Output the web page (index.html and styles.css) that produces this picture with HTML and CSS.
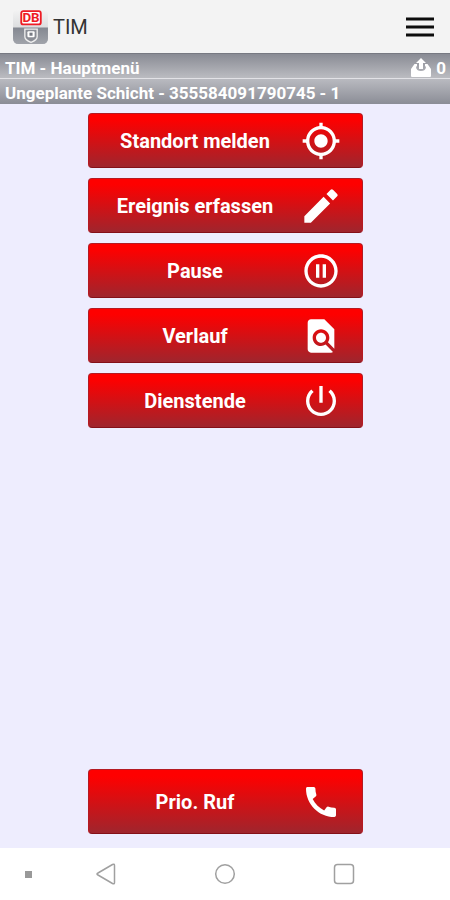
FILE: index.html
```html
<!DOCTYPE html>
<html lang="de">
<head>
<meta charset="utf-8">
<meta name="viewport" content="width=device-width, initial-scale=1">
<title>TIM - Hauptmenü</title>
<link rel="stylesheet" href="styles.css">
</head>
<body>
<header class="appbar">
  <svg class="logo" viewBox="0 0 36 36" aria-hidden="true">
    <defs>
      <linearGradient id="top" x1="0" y1="0" x2="0" y2="1"><stop offset="0" stop-color="#f4f4f4"/><stop offset="1" stop-color="#c8cacd"/></linearGradient>
      <linearGradient id="base" x1="0" y1="0" x2="0" y2="1"><stop offset="0" stop-color="#848891"/><stop offset="1" stop-color="#a0a3aa"/></linearGradient>
    </defs>
    <rect x="1" y="1" width="34" height="34" rx="5" fill="url(#top)"/>
    <path d="M1 19h34v11a5 5 0 0 1-5 5H6a5 5 0 0 1-5-5z" fill="url(#base)"/>
    <rect x="9" y="3" width="19" height="13" rx="2" fill="#fff" stroke="#ee1c25" stroke-width="1.800"/>
    <text class="logo-text" x="18.500" y="14" text-anchor="middle">DB</text>
    <path d="M12.500 20.500h12v7.500c0 2.500-3.500 4.500-6 5.500-2.500-1-6-3-6-5.500z" fill="#8b8e96" stroke="#eee" stroke-width="1.300"/>
    <rect x="15" y="22.500" width="7" height="6" rx="1" fill="#fff"/>
    <rect x="17" y="24" width="3" height="3" fill="#777b84"/>
  </svg>
  <h1 class="title">TIM</h1>
  <button class="menu" type="button" aria-label="Menü">
    <svg viewBox="0 0 28 20" aria-hidden="true"><path d="M0 2h28M0 10h28M0 18h28" stroke="#0c0c0c" stroke-width="3"/></svg>
  </button>
</header>
<div class="strip strip-top">
  <span>TIM - Hauptmenü</span>
  <span class="outbox">
    <svg viewBox="0 0 20 20" aria-hidden="true"><path d="M10 0l5 5h-3v6H8V5H5z"/><path d="M3.500 6H6v2.500H5c0 3 2 4.500 5 4.500s5-1.500 5-4.500h-1V6h2.500l3.500 5v7q0 1-1 1H1q-1 0-1-1v-7z"/></svg>
    <span>0</span>
  </span>
</div>
<div class="strip strip-bottom"><span>Ungeplante Schicht - 355584091790745 - 1</span></div>
<main class="content">
  <button class="action" type="button"><span>Standort melden</span>
    <svg viewBox="0 0 24 24" aria-hidden="true"><path d="M12 8c-2.210 0-4 1.790-4 4s1.790 4 4 4 4-1.790 4-4-1.790-4-4-4zm8.940 3c-.46-4.170-3.770-7.480-7.940-7.940V1h-2v2.060C6.830 3.520 3.520 6.830 3.060 11H1v2h2.060c.46 4.170 3.770 7.480 7.940 7.940V23h2v-2.060c4.170-.46 7.480-3.770 7.940-7.940H23v-2h-2.060zM12 19c-3.870 0-7-3.130-7-7s3.130-7 7-7 7 3.130 7 7-3.130 7-7 7z"/></svg>
  </button>
  <button class="action" type="button"><span>Ereignis erfassen</span>
    <svg viewBox="0 0 24 24" aria-hidden="true"><path d="M2 18.080V22h3.920L17.480 10.440l-3.920-3.920zM21.700 6.220a1 1 0 0 0 0-1.410L19.190 2.300a1 1 0 0 0-1.410 0l-2.500 2.500 3.920 3.920z"/></svg>
  </button>
  <button class="action" type="button"><span>Pause</span>
    <svg viewBox="0 0 24 24" aria-hidden="true"><path d="M9 16h2V8H9v8zm3-14C6.480 2 2 6.480 2 12s4.480 10 10 10 10-4.480 10-10S17.520 2 12 2zm0 18c-4.410 0-8-3.590-8-8s3.590-8 8-8 8 3.590 8 8-3.590 8-8 8zm1-4h2V8h-2v8z"/></svg>
  </button>
  <button class="action" type="button"><span>Verlauf</span>
    <svg viewBox="0 0 24 24" aria-hidden="true"><path d="M20 19.590V8l-6-6H6c-1.100 0-1.990.9-1.990 2L4 20c0 1.100.89 2 1.990 2H18c.45 0 .85-.15 1.190-.4l-4.430-4.430c-.8.520-1.740.83-2.760.83-2.760 0-5-2.240-5-5s2.240-5 5-5 5 2.240 5 5c0 1.020-.31 1.960-.83 2.750L20 19.590zM9 13c0 1.660 1.340 3 3 3s3-1.340 3-3-1.340-3-3-3-3 1.340-3 3z"/></svg>
  </button>
  <button class="action" type="button"><span>Dienstende</span>
    <svg viewBox="0 0 24 24" aria-hidden="true"><path d="M13 3h-2v10h2V3zm4.830 2.170l-1.420 1.420C17.990 7.860 19 9.810 19 12c0 3.870-3.130 7-7 7s-7-3.130-7-7c0-2.190 1.010-4.140 2.580-5.420L6.170 5.170C4.230 6.820 3 9.260 3 12c0 4.970 4.030 9 9 9s9-4.030 9-9c0-2.740-1.230-5.180-3.170-6.830z"/></svg>
  </button>
  <button class="action action-call" type="button"><span>Prio. Ruf</span>
    <svg viewBox="0 0 24 24" aria-hidden="true"><path d="M20.010 15.380c-1.230 0-2.420-.2-3.530-.56-.35-.12-.74-.03-1.010.24l-1.570 1.970c-2.830-1.350-5.480-3.900-6.890-6.830l1.950-1.660c.27-.28.350-.67.240-1.020-.37-1.110-.56-2.300-.56-3.530 0-.54-.45-.99-.99-.99H4.190C3.650 3 3 3.240 3 3.990 3 13.280 10.730 21 20.010 21c.71 0 .99-.63.99-1.180v-3.450c0-.54-.45-.99-.99-.99z"/></svg>
  </button>
</main>
<nav class="sysnav" aria-label="Systemnavigation">
  <span class="dot"></span>
  <button type="button" aria-label="Zurück"><svg viewBox="0 0 22 22" aria-hidden="true"><path d="M17.500 1.500q2-1 2 1v17q0 2-2 1L3 12q-2-1 0-2z"/></svg></button>
  <button type="button" aria-label="Startbildschirm"><svg viewBox="0 0 22 22" aria-hidden="true"><circle cx="11" cy="11" r="9.300"/></svg></button>
  <button type="button" aria-label="Letzte Apps"><svg viewBox="0 0 22 22" aria-hidden="true"><rect x="1.500" y="1.500" width="19" height="19" rx="3"/></svg></button>
</nav>
</body>
</html>
```
FILE: styles.css
```css
* {
  box-sizing: border-box;
}

body {
  margin: 0;
  min-height: 100vh;
  display: flex;
  flex-direction: column;
  background: #eeedfe;
  font-family: Roboto, "Liberation Sans", sans-serif;
}

button {
  margin: 0;
  padding: 0;
  border: 0;
  background: none;
  font: inherit;
  color: inherit;
}

svg {
  display: block;
}

.appbar {
  height: 53px;
  padding: 0 16px 0 12px;
  display: flex;
  align-items: center;
  gap: 4px;
  background: #f3f3f3;
}

.logo {
  width: 37px;
  height: 37px;
}

.logo-text {
  font: bold 13px Roboto, sans-serif;
  fill: #ee1c25;
}

.title {
  margin: 0;
  flex: 1;
  font-size: 20px;
  font-weight: 400;
  color: #333;
}

.menu svg {
  width: 28px;
  height: 20px;
}

.strip {
  height: 25px;
  padding: 3px 4px 0 5px;
  display: flex;
  align-items: center;
  justify-content: space-between;
  font-size: 17px;
  line-height: 20px;
  font-weight: 700;
  color: #fff;
}

.strip-top {
  height: 26px;
  background: linear-gradient(#898b94, #bbbcc1);
  border-top: 1px solid #777982;
  border-bottom: 1px solid #e2e2e6;
}

.strip-bottom {
  background: linear-gradient(#b9bac0, #8b8d96);
}

.outbox {
  display: flex;
  align-items: center;
  gap: 5px;
}

.outbox svg {
  width: 20px;
  height: 20px;
  fill: #fff;
}

.content {
  flex: 1;
  padding: 9px 20px 14px 21px;
  display: flex;
  flex-direction: column;
  align-items: center;
  gap: 10px;
}

.action {
  width: 67%;
  min-height: 55px;
  padding-right: 21px;
  display: grid;
  grid-template-columns: 1fr 40px;
  align-items: center;
  border: 1px solid #b51a22;
  border-bottom-color: #851018;
  border-radius: 4px;
  background: linear-gradient(#fe0000 10%, #9f252d);
  font-size: 20px;
  line-height: 24px;
  font-weight: 700;
  text-align: center;
  color: #fff;
}

.action svg {
  width: 40px;
  height: 40px;
  fill: #fff;
}

.action-call {
  min-height: 65px;
  margin-top: auto;
}

.sysnav {
  height: 52px;
  display: grid;
  grid-template-columns: 46px 1fr 1fr 1fr 46px;
  align-items: center;
  justify-items: center;
  background: #fff;
}

.sysnav svg {
  width: 22px;
  height: 22px;
  fill: none;
  stroke: #a0a0a0;
  stroke-width: 1.5;
}

.dot {
  width: 7px;
  height: 7px;
  margin-left: 10px;
  background: #999;
}
```
